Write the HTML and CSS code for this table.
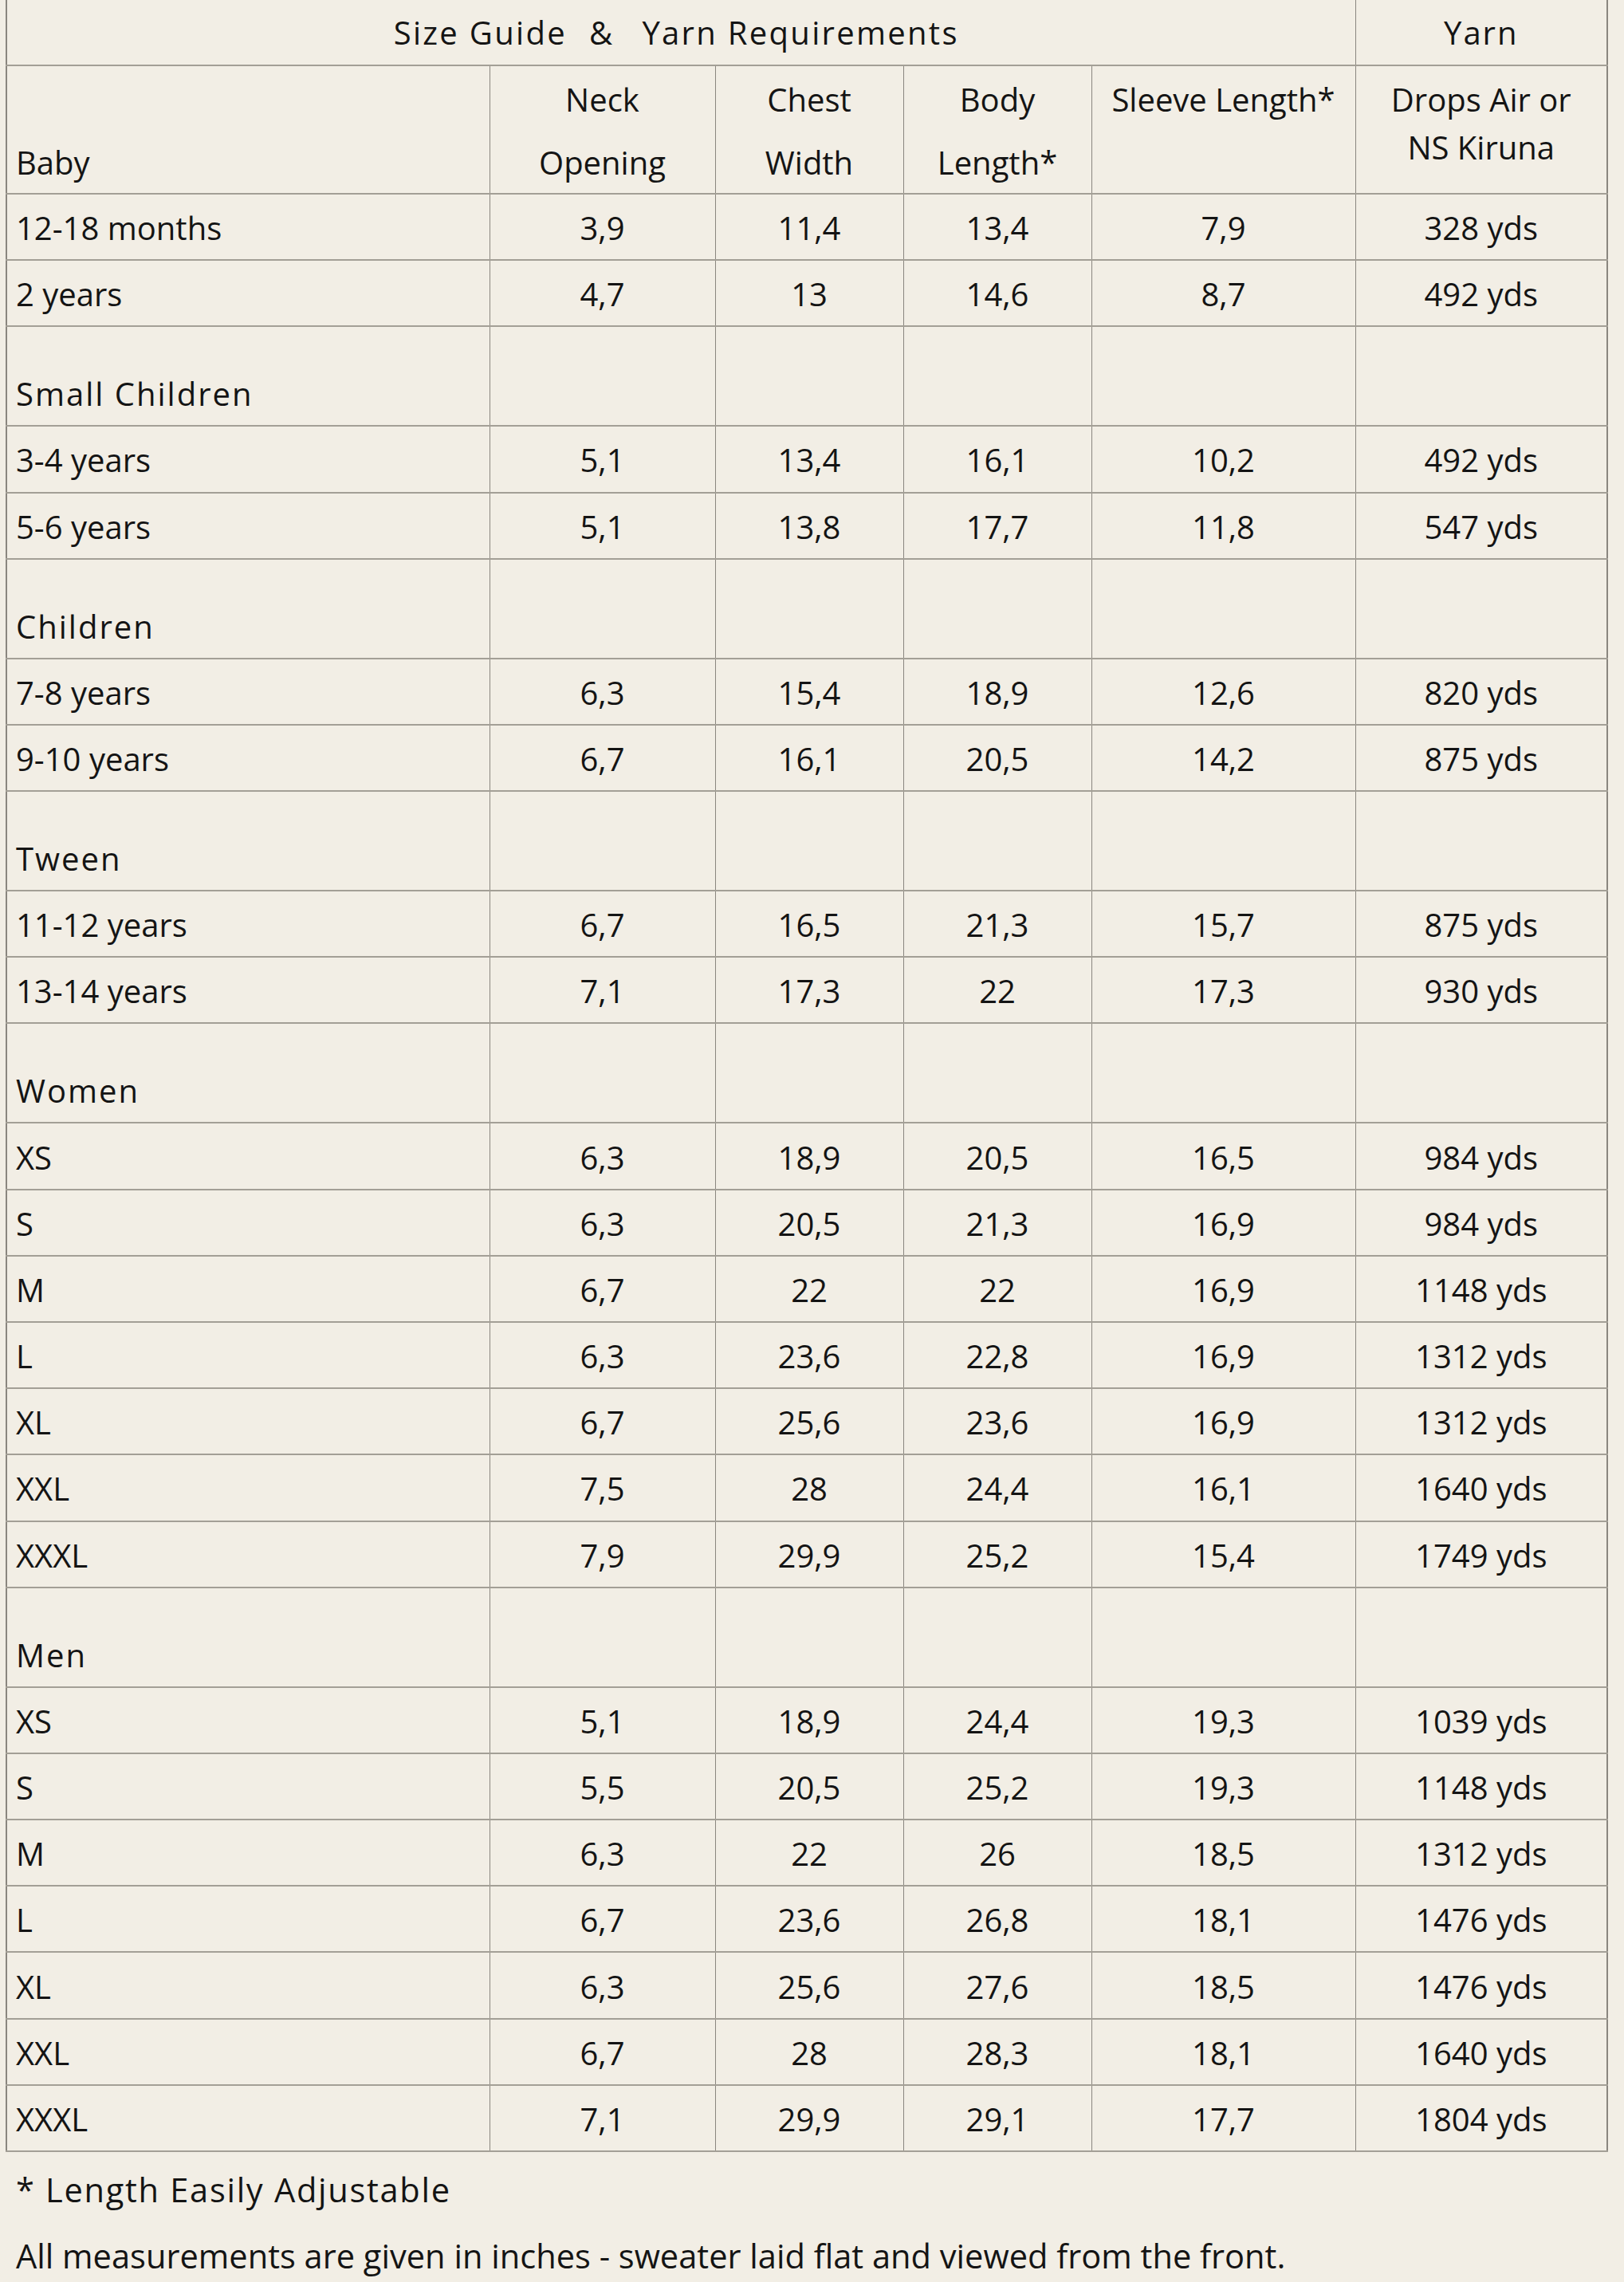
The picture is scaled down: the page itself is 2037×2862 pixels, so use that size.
FILE: index.html
```html
<!DOCTYPE html>
<html lang="en">
<head>
<meta charset="utf-8">
<title>Size Guide &amp; Yarn Requirements</title>
<link rel="stylesheet" href="styles.css">
</head>
<body>
<main class="page">
  <table class="guide">
    <colgroup>
      <col class="c-size">
      <col class="c-neck">
      <col class="c-chest">
      <col class="c-body">
      <col class="c-sleeve">
      <col class="c-yarn">
    </colgroup>
    <thead>
      <tr class="title-row">
        <th colspan="5" class="spaced title">Size Guide<span class="amp">&amp;</span>Yarn Requirements</th>
        <th class="spaced">Yarn</th>
      </tr>
      <tr class="head-row">
        <th class="first bottom">Baby</th>
        <th><div class="l1">Neck</div><div class="l2">Opening</div></th>
        <th><div class="l1">Chest</div><div class="l2">Width</div></th>
        <th><div class="l1">Body</div><div class="l2">Length*</div></th>
        <th><div class="l1">Sleeve Length*</div></th>
        <th><div class="l1">Drops Air or<br>NS Kiruna</div></th>
      </tr>
    </thead>
    <tbody>
      <tr><td>12-18 months</td><td>3,9</td><td>11,4</td><td>13,4</td><td>7,9</td><td>328 yds</td></tr>
      <tr><td>2 years</td><td>4,7</td><td>13</td><td>14,6</td><td>8,7</td><td>492 yds</td></tr>
      <tr class="section"><td class="spaced">Small Children</td><td></td><td></td><td></td><td></td><td></td></tr>
      <tr><td>3-4 years</td><td>5,1</td><td>13,4</td><td>16,1</td><td>10,2</td><td>492 yds</td></tr>
      <tr><td>5-6 years</td><td>5,1</td><td>13,8</td><td>17,7</td><td>11,8</td><td>547 yds</td></tr>
      <tr class="section"><td class="spaced">Children</td><td></td><td></td><td></td><td></td><td></td></tr>
      <tr><td>7-8 years</td><td>6,3</td><td>15,4</td><td>18,9</td><td>12,6</td><td>820 yds</td></tr>
      <tr><td>9-10 years</td><td>6,7</td><td>16,1</td><td>20,5</td><td>14,2</td><td>875 yds</td></tr>
      <tr class="section"><td class="spaced">Tween</td><td></td><td></td><td></td><td></td><td></td></tr>
      <tr><td>11-12 years</td><td>6,7</td><td>16,5</td><td>21,3</td><td>15,7</td><td>875 yds</td></tr>
      <tr><td>13-14 years</td><td>7,1</td><td>17,3</td><td>22</td><td>17,3</td><td>930 yds</td></tr>
      <tr class="section"><td class="spaced">Women</td><td></td><td></td><td></td><td></td><td></td></tr>
      <tr><td>XS</td><td>6,3</td><td>18,9</td><td>20,5</td><td>16,5</td><td>984 yds</td></tr>
      <tr><td>S</td><td>6,3</td><td>20,5</td><td>21,3</td><td>16,9</td><td>984 yds</td></tr>
      <tr><td>M</td><td>6,7</td><td>22</td><td>22</td><td>16,9</td><td>1148 yds</td></tr>
      <tr><td>L</td><td>6,3</td><td>23,6</td><td>22,8</td><td>16,9</td><td>1312 yds</td></tr>
      <tr><td>XL</td><td>6,7</td><td>25,6</td><td>23,6</td><td>16,9</td><td>1312 yds</td></tr>
      <tr><td>XXL</td><td>7,5</td><td>28</td><td>24,4</td><td>16,1</td><td>1640 yds</td></tr>
      <tr><td>XXXL</td><td>7,9</td><td>29,9</td><td>25,2</td><td>15,4</td><td>1749 yds</td></tr>
      <tr class="section"><td class="spaced">Men</td><td></td><td></td><td></td><td></td><td></td></tr>
      <tr><td>XS</td><td>5,1</td><td>18,9</td><td>24,4</td><td>19,3</td><td>1039 yds</td></tr>
      <tr><td>S</td><td>5,5</td><td>20,5</td><td>25,2</td><td>19,3</td><td>1148 yds</td></tr>
      <tr><td>M</td><td>6,3</td><td>22</td><td>26</td><td>18,5</td><td>1312 yds</td></tr>
      <tr><td>L</td><td>6,7</td><td>23,6</td><td>26,8</td><td>18,1</td><td>1476 yds</td></tr>
      <tr><td>XL</td><td>6,3</td><td>25,6</td><td>27,6</td><td>18,5</td><td>1476 yds</td></tr>
      <tr><td>XXL</td><td>6,7</td><td>28</td><td>28,3</td><td>18,1</td><td>1640 yds</td></tr>
      <tr><td>XXXL</td><td>7,1</td><td>29,9</td><td>29,1</td><td>17,7</td><td>1804 yds</td></tr>
    </tbody>
  </table>
  <p class="note note-star">* Length Easily Adjustable</p>
  <p class="note">All measurements are given in inches - sweater laid flat and viewed from the front.</p>
</main>
</body>
</html>
```

FILE: styles.css
```css
html, body {
  margin: 0;
  padding: 0;
  background: #f2eee5;
}

body {
  font-family: "Open Sans", "Noto Sans", "DejaVu Sans", sans-serif;
  color: #141414;
  font-size: 40px;
  line-height: 60px;
}

.page {
  padding: 0 0 0 7px;
  width: 2008px;
}

.guide {
  width: 2008px;
  table-layout: fixed;
  border-collapse: collapse;
  border-left: 2px solid #8a867f;
  border-right: 2px solid #8a867f;
}

.c-size { width: 606px; }
.c-neck { width: 283px; }
.c-chest { width: 236px; }
.c-body { width: 236px; }
.c-sleeve { width: 331px; }
.c-yarn { width: 316px; }

.guide th,
.guide td {
  font-weight: 400;
  text-align: center;
  vertical-align: middle;
  padding: 12.1px 11px 9.1px;
  border-left: 1px solid #8a867f;
  border-right: 1px solid #8a867f;
  border-bottom: 2px solid #a39f96;
  white-space: nowrap;
}

.guide td:first-child,
.guide th.first {
  text-align: left;
}

.spaced {
  letter-spacing: 2px;
}

.title-row th {
  padding: 11px 11px 10px;
}

.title-row th.title {
  letter-spacing: 2.3px;
  padding-right: 23px;
}

.amp {
  margin: 0 35px 0 28px;
}

.head-row th {
  vertical-align: top;
  padding: 12px 10px 8px;
}

.head-row th.bottom {
  vertical-align: bottom;
  padding: 0 11px 8px;
}

.head-row .l2 {
  margin-top: 19px;
}

.section td {
  padding-top: 53.9px;
  vertical-align: bottom;
}

.note {
  margin: 0;
  padding-left: 13px;
  font-size: 41.6px;
  line-height: 66px;
}

.note-star {
  letter-spacing: 1.7px;
}

.guide + .note {
  margin-top: 14px;
}

.note + .note {
  margin-top: 17px;
}
```
